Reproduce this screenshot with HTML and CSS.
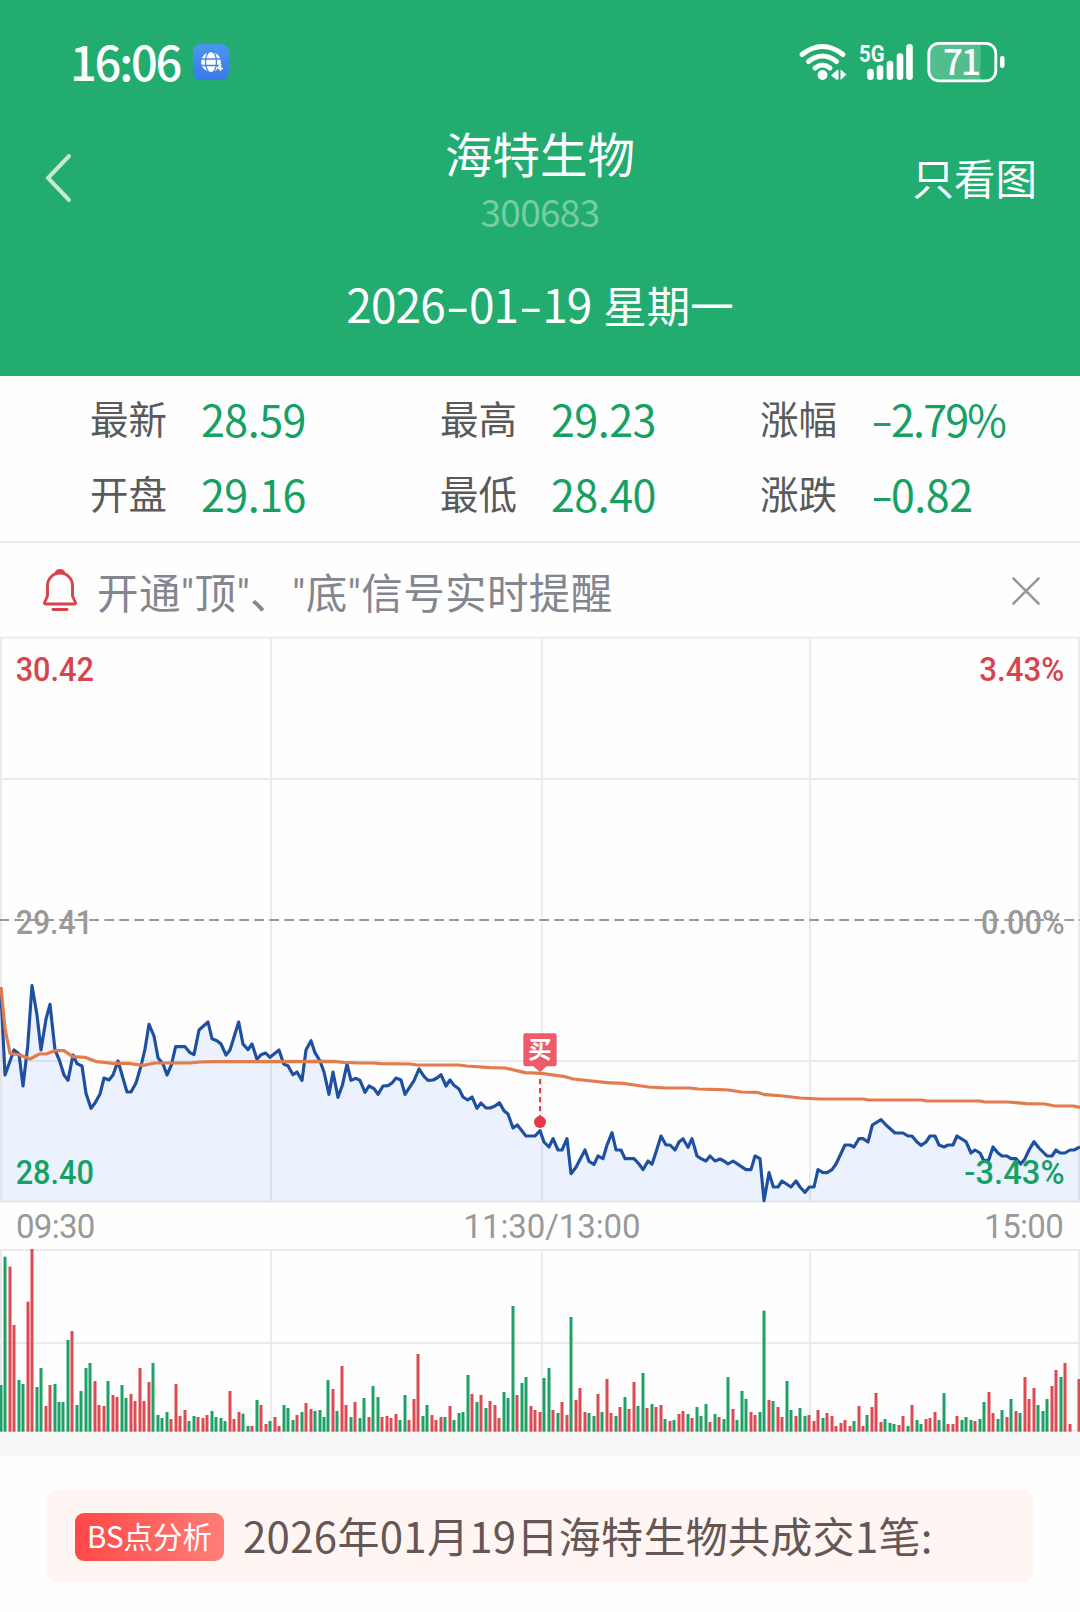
FILE: index.html
```
<!DOCTYPE html>
<html lang="zh-CN">
<head>
    <meta charset="UTF-8">
    <meta name="viewport" content="width=device-width, initial-scale=1.0">
    <title>海特生物 300683</title>
    <link rel="stylesheet" href="styles.css">
</head>
<body>
    <header class="header">
        <div class="status-bar">
            <span class="clock">16:06</span>
            <svg class="globe" width="36" height="36" viewBox="0 0 36 36">
                <defs>
                    <linearGradient id="globeBg" x1="0" y1="0" x2="0" y2="1">
                        <stop offset="0" stop-color="#4a97ee"/>
                        <stop offset="1" stop-color="#3a78ea"/>
                    </linearGradient>
                </defs>
                <rect width="36" height="36" rx="8" fill="url(#globeBg)"/>
                <circle cx="18" cy="18" r="10" fill="#fff"/>
                <g fill="none" stroke="#4286ec" stroke-width="1.3">
                    <ellipse cx="18" cy="18" rx="5.5" ry="11"/>
                    <path d="M7 15h22M7 21.5h22"/>
                </g>
                <path d="M24 27v-5h6v5z" fill="#3f7feb"/>
                <path d="M27.500 20v7M24.500 24.500l3-4M25 24.500h5" fill="none" stroke="#fff" stroke-width="1.500"/>
            </svg>
            <svg class="wifi" width="48" height="38" viewBox="0 0 48 38">
                <g fill="none" stroke="#fff" stroke-width="5" stroke-linecap="round">
                    <path d="M3 11.500Q23.500 -4.500 44 11.500"/>
                    <path d="M9.500 18.500Q23.500 7.500 37.500 18.500"/>
                    <path d="M16 25Q23.500 19 31 25"/>
                </g>
                <circle cx="23.500" cy="32" r="4.900" fill="#fff"/>
                <path d="M32 32.500l6-5.500v10zM47.500 31.500l-6-5v10.500zM38 27h1.500v9.500H38z" fill="#fff"/>
            </svg>
            <svg class="signal" width="56" height="38" viewBox="0 0 56 38">
                <text class="net" x="0" y="19" textLength="25.500" lengthAdjust="spacingAndGlyphs">5G</text>
                <g stroke="#fff" stroke-width="6.600" stroke-linecap="round">
                    <path d="M11.500 29v4.700M21 25.500v8.200M31 21v12.700M41 13.500v20.200M50.500 4.300v29.400"/>
                </g>
            </svg>
            <svg class="battery" width="80" height="42" viewBox="0 0 80 42">
                <path d="M11 3H53.500V39H11a8 8 0 0 1-8-8V11a8 8 0 0 1 8-8z" fill="#fff" opacity=".22"/>
                <rect x="1.800" y="2.300" width="67" height="37.500" rx="10" fill="none" stroke="#fff" stroke-width="2.800"/>
                <rect x="73" y="15" width="4.500" height="12" rx="2.200" fill="#fff"/>
                <text class="level" x="16" y="33.500" textLength="38">71</text>
            </svg>
        </div>

        <div class="nav">
            <svg class="back" width="28" height="50" viewBox="0 0 28 50">
                <path d="M25 3L4 25L25 47" fill="none" stroke="#c6e8d6" stroke-width="4" stroke-linecap="round"/>
            </svg>
            <div class="name">
                <h1>海特生物</h1>
                <div class="code">300683</div>
            </div>
            <a class="only-chart">只看图</a>
        </div>

        <div class="date"><span class="num">2026<i>-</i>01<i>-</i>19</span> 星期一</div>
    </header>

    <section class="stats">
        <div class="stat"><span class="label">最新</span><span class="value">28.59</span></div>
        <div class="stat"><span class="label">最高</span><span class="value">29.23</span></div>
        <div class="stat"><span class="label">涨幅</span><span class="value percent"><i>-</i>2.79%</span></div>
        <div class="stat"><span class="label">开盘</span><span class="value">29.16</span></div>
        <div class="stat"><span class="label">最低</span><span class="value">28.40</span></div>
        <div class="stat"><span class="label">涨跌</span><span class="value"><i>-</i>0.82</span></div>
    </section>

    <section class="notice">
        <svg class="bell" width="36" height="44" viewBox="0 0 36 44">
            <g fill="none" stroke="#d8434b" stroke-width="2.900" stroke-linecap="round" stroke-linejoin="round">
                <path d="M5.500 28V17.500a12.500 12.500 0 0 1 25 0V28L33.500 34.500Q33.800 36 32 36H4Q2.200 36 2.500 34.500z"/>
                <path d="M14 5Q15 2.500 18 2.500T22 5"/>
                <path d="M11 41.500h14"/>
            </g>
        </svg>
        <span class="notice-text">开通"顶"、"底"信号实时提醒</span>
        <svg class="close" width="30" height="30" viewBox="0 0 30 30">
            <path d="M2.500 2.500l25 25M27.500 2.500l-25 25" stroke="#999" stroke-width="2.600" stroke-linecap="round"/>
        </svg>
    </section>

    <!-- minute chart, 3 units per pixel -->
    <svg class="price-chart" viewBox="0 -792 3240 1701">
        <g class="grid">
            <path d="M0 -787H3240M0 -363H3240M0 483H3240M0 905H3240"/>
            <path d="M3 -787V905M813 -787V905M1626 -787V905M2430 -787V905M3237 -787V905"/>
        </g>
        <path class="zero" d="M-2 60H3240"/>
        <g class="axis">
            <text class="up" x="47" y="-657" textLength="235" lengthAdjust="spacingAndGlyphs">30.42</text>
            <text class="up" x="2938" y="-657" textLength="255" lengthAdjust="spacingAndGlyphs">3.43%</text>
            <text class="flat" x="47" y="101" textLength="232" lengthAdjust="spacingAndGlyphs">29.41</text>
            <text class="flat" x="2943" y="101" textLength="251" lengthAdjust="spacingAndGlyphs">0.00%</text>
        </g>
        <polygon class="area" id="area"/>
        <polyline class="price" id="price"/>
        <polyline class="avg" id="avg"/>
        <g class="axis">
            <text class="down" x="47" y="852" textLength="235" lengthAdjust="spacingAndGlyphs">28.40</text>
            <text class="down" x="2893" y="852" textLength="301" lengthAdjust="spacingAndGlyphs">-3.43%</text>
        </g>
        <g class="buy">
            <path class="buy-line" d="M1620 537V655"/>
            <circle cx="1620" cy="666" r="18"/>
            <path class="buy-box" d="M1576 400H1664Q1670 400 1670 406V493Q1670 499 1664 499H1640L1620 516L1600 499H1576Q1570 499 1570 493V406Q1570 400 1576 400z"/>
            <text x="1620" y="474" text-anchor="middle">买</text>
        </g>
    </svg>

    <div class="times">
        <span>09:30</span>
        <span class="noon">11:30/13:00</span>
        <span>15:00</span>
    </div>

    <svg class="volume-chart" viewBox="0 24 3240 552">
        <g class="grid">
            <path d="M0 30H3240M0 309H3240M0 572H3240"/>
            <path d="M3 30V575M813 30V575M1626 30V575M2430 30V575M3237 30V575"/>
        </g>
        <g id="volume"></g>
    </svg>

    <div class="gap"></div>

    <section class="analysis">
        <span class="tag">BS点分析</span>
        <span class="summary">2026年01月19日海特生物共成交1笔:</span>
    </section>

    <script src="chart.js"></script>
</body>
</html>
```
FILE: styles.css
```
body {
    margin: 0;
    width: 1080px;
    height: 1612px;
    overflow: hidden;
    background-color: #fefefe;
    font-family: "Noto Sans CJK SC", "Noto Sans", sans-serif;
}

svg {
    display: block;
    flex-shrink: 0;
}

.header {
    height: 376px;
    background-color: #22ac6f;
    color: #ffffff;
}

.status-bar {
    display: flex;
    align-items: flex-start;
    height: 122px;
    padding: 0 73px 0 70px;
    box-sizing: border-box;
}

.status-bar svg {
    overflow: visible;
}

.clock {
    width: 123px;
    margin-top: 31px;
    font-size: 47px;
    font-weight: 500;
    line-height: 60px;
    letter-spacing: -2.2px;
}

.globe {
    margin-top: 44px;
}

.wifi {
    margin-top: 43px;
    margin-left: auto;
}

.signal {
    margin-top: 43px;
    margin-left: 12px;
}

.net {
    font-family: Roboto, sans-serif;
    font-size: 24px;
    font-weight: 700;
    fill: #ffffff;
}

.battery {
    margin-top: 41px;
    margin-left: 12px;
}

.level {
    font-size: 35px;
    font-weight: 500;
    fill: #ffffff;
}

.nav {
    display: grid;
    grid-template-columns: 200px 1fr 200px;
    height: 117px;
}

.back {
    margin: 31px 0 0 44px;
}

.name {
    padding-top: 2px;
    text-align: center;
}

.name h1 {
    margin: 0;
    font-size: 47.5px;
    font-weight: 400;
    line-height: 58px;
}

.code {
    font-size: 37px;
    line-height: 58px;
    letter-spacing: -0.7px;
    color: #76cca4;
}

.only-chart {
    padding-right: 43px;
    font-size: 41.5px;
    line-height: 111px;
    text-align: right;
}

.date {
    font-size: 43.5px;
    line-height: 128px;
    text-align: center;
    white-space: nowrap;
}

.date .num {
    margin-right: 2px;
    font-size: 46px;
    letter-spacing: -0.9px;
}

/* wide minus sign */
.num i,
.value i {
    display: inline-block;
    font-style: normal;
    transform: scaleX(1.5);
}

.num i {
    width: 24px;
    text-align: center;
}

.value i {
    width: 20px;
    transform-origin: left;
}

.stats {
    display: grid;
    grid-template-columns: 350px 320px 1fr;
    grid-template-rows: 75px 75px;
    height: 167px;
    padding: 4px 0 0 90px;
    box-sizing: border-box;
    border-bottom: 2px solid #ebebeb;
}

.stat {
    display: flex;
    line-height: 75px;
    white-space: nowrap;
}

.label {
    width: 111px;
    font-size: 38.5px;
    color: #5a5a5a;
}

.value {
    margin-top: 1px;
    font-size: 43px;
    letter-spacing: -0.5px;
    color: #16a064;
}

.percent {
    letter-spacing: -1.8px;
}

.notice {
    display: flex;
    align-items: center;
    height: 93px;
    padding: 0 39px 0 42px;
}

.notice-text {
    margin-left: 19px;
    margin-top: 11px;
    font-family: Roboto, "Noto Sans CJK SC", sans-serif;
    font-size: 41.5px;
    line-height: 60px;
    letter-spacing: 0.4px;
    color: #82868e;
}

.close {
    margin-left: auto;
    margin-top: 3px;
}

.price-chart {
    width: 1080px;
    height: 567px;
}

.grid path {
    fill: none;
    stroke: #ebebeb;
    stroke-width: 6;
}

.zero {
    stroke: #999999;
    stroke-width: 6;
    stroke-dasharray: 29 16;
}

.axis text {
    font-family: Roboto, sans-serif;
    font-size: 98px;
    font-weight: 500;
}

.up {
    fill: #d6444c;
}

.down {
    fill: #16a064;
}

.flat {
    fill: #999999;
}

.area {
    fill: #2b78ff;
    fill-opacity: 0.09;
}

.price,
.avg {
    fill: none;
    stroke-width: 9.5;
    stroke-linejoin: round;
}

.price {
    stroke: #1f50a0;
}

.avg {
    stroke: #e27b4e;
}

.buy circle {
    fill: #e83844;
}

.buy-line {
    stroke: #d8434e;
    stroke-width: 6;
    stroke-dasharray: 16 11;
}

.buy-box {
    fill: #ec4457;
    fill-opacity: 0.88;
}

.buy text {
    font-size: 70px;
    font-weight: 700;
    fill: #ffffff;
}

.times {
    display: flex;
    justify-content: space-between;
    height: 45px;
    padding: 0 17px 0 16px;
    font-family: Roboto, sans-serif;
    font-size: 33px;
    line-height: 47px;
    letter-spacing: -0.7px;
    color: #999999;
}

.noon {
    margin-left: 25px;
    letter-spacing: -0.1px;
}

.volume-chart {
    width: 1080px;
    height: 184px;
}

.bar-up {
    fill: #dc4a52;
}

.bar-down {
    fill: #1fa066;
}

.gap {
    height: 24px;
    background-color: #f6f6f6;
}

.analysis {
    display: flex;
    align-items: center;
    height: 92px;
    margin: 34px 46px 0;
    padding: 0 29px;
    border-radius: 12px;
    background-color: #fff6f4;
}

.tag {
    width: 149px;
    height: 48px;
    margin-top: 1px;
    border-radius: 9px;
    background: linear-gradient(100deg, #ff4647, #ff8079);
    font-size: 29.5px;
    line-height: 45px;
    text-align: center;
    color: #ffffff;
}

.summary {
    margin: -3px 0 0 19px;
    font-size: 42px;
    line-height: 60px;
    letter-spacing: 0.3px;
    color: #665654;
    white-space: nowrap;
}
```
FILE: chart.js
```
// x,y pairs in chart units
const price = `2,262 15,525 42,450 57,462 69,558 83,440 96,257 111,345 123,450 138,357 150,313 165,450 178,480
192,525 204,541 219,465 231,491 246,498 258,580 273,625 285,609 300,582 312,534 327,540 339,525 354,483
381,576 393,576 408,549 423,498 435,447 447,373 462,408 474,473 489,492 501,525 514,495 527,440 555,440
570,458 582,464 597,390 624,366 636,416 651,422 663,432 678,465 690,450 716,366 729,432 744,449 756,432
771,478 783,464 797,459 810,472 837,450 851,492 864,497 879,524 891,516 906,541 918,450 933,422 945,458
960,483 972,516 987,583 999,516 1014,592 1027,556 1041,492 1053,541 1068,535 1080,541 1095,577 1107,558
1122,566 1134,583 1149,558 1164,557 1176,549 1188,534 1203,540 1215,583 1242,542 1257,507 1272,529
1284,541 1299,540 1311,534 1323,524 1338,558 1350,540 1362,556 1377,567 1389,591 1403,600 1416,591
1431,625 1443,609 1458,624 1470,624 1485,618 1498,608 1512,632 1524,642 1539,684 1552,675 1578,708
1605,708 1620,692 1632,726 1647,741 1659,716 1674,750 1686,750 1701,716 1713,821 1728,802 1755,750
1767,784 1782,793 1794,768 1809,776 1821,735 1836,698 1848,750 1863,750 1875,776 1902,776 1917,792
1929,809 1944,783 1956,793 1970,750 1983,708 1998,735 2010,735 2025,750 2037,726 2049,716 2064,742
2076,716 2091,768 2103,776 2118,783 2130,768 2145,783 2160,777 2172,783 2184,792 2199,783 2238,809
2253,809 2265,768 2280,776 2292,902 2307,818 2320,861 2334,861 2346,843 2373,861 2388,843 2400,861
2415,877 2428,861 2442,861 2454,809 2469,818 2481,818 2496,809 2508,792 2535,735 2550,735 2562,741
2577,716 2589,716 2604,726 2617,675 2643,659 2658,675 2685,699 2709,699 2724,708 2736,708 2751,726
2763,736 2778,726 2790,708 2805,708 2817,735 2832,741 2844,735 2859,735 2871,708 2898,725 2913,759
2925,750 2940,759 2952,783 2966,780 2979,741 2994,759 3006,768 3021,768 3033,776 3048,776 3062,792
3075,776 3087,750 3102,725 3117,744 3141,768 3156,768 3168,750 3180,759 3195,759 3210,750 3222,750
3240,741`;

const avg = `3,262 15,385 30,460 60,465 90,477 118,462 138,462 165,452 192,452 218,470 255,472 290,485 340,490
385,490 430,496 465,489 570,489 600,486 640,485 1000,484 1030,487 1080,489 1120,489 1140,491 1230,492
1250,495 1375,495 1400,498 1470,503 1515,504 1575,518 1625,520 1695,530 1720,537 1820,548 1870,550
1945,561 2000,564 2070,564 2095,567 2160,569 2185,570 2225,576 2270,577 2295,584 2350,588 2400,594
2460,597 2590,597 2605,600 2765,600 2780,603 2940,603 2955,606 3025,606 3080,611 3135,612 3165,618
3220,618 3240,622`;

// one entry per minute: top of the bar, g = down, r = up
const volume = `435g 50g 80r 255r 420g 432g 185r 27r 441g 384g 498r 435r 432g 486g 486g 300g 273r 495g 453g 384g
369g 423r 495r 498r 423g 465r 471r 435g 474g 462r 483r 384r 483r 426r 369g 525g 534g 516g 537r 432r
528r 510r 543g 528g 531r 534r 525r 513g 531g 534g 543g 453r 537r 516r 521g 558g 558r 480g 495r 552r
543g 531r 558r 495g 504g 540g 525r 516g 489r 507r 513g 510g 531g 420g 447r 513g 378r 495r 531g 486r
534g 474g 531r 438g 471g 531r 528r 534r 522r 540g 465g 540r 477r 342r 528g 495g 525r 540r 531r 531g
498r 540g 519g 516g 405g 462r 486g 465r 504g 483r 495r 534r 456g 474g 198g 465r 429g 411g 498r 510r
516r 414g 384g 510r 519g 486r 525r 231g 480r 444r 516r 519g 528g 462r 516g 417r 519r 528g 501r 471g
507r 426r 498g 399g 504r 492g 501r 495r 537g 543r 540g 522r 513r 522g 534r 501g 528g 492g 546r 522g
531r 537g 411g 507r 540g 453g 477g 516r 525r 516g 212g 480r 483g 501r 531r 423g 510g 528r 504g 528g
525r 543r 510r 534g 519r 528r 558r 549r 540r 558r 543g 498r 558r 525g 501r 459r 546r 537g 549g 552g
555r 528r 558g 495r 540g 552g 537r 534r 516r 540g 459g 552r 552r 528r 540g 531g 540g 543r 537g 486g
456r 519r 537g 510g 531r 477g 513r 519g 411r 477r 444r 495g 513g 477g 438r 390r 411g 369r 552r 575g
417r`;

document.getElementById('price').setAttribute('points', price);
document.getElementById('avg').setAttribute('points', avg);
document.getElementById('area').setAttribute('points', price + ' 3240,905 2,905');

const group = document.getElementById('volume');
volume.split(/\s+/).forEach((item, i) => {
    const top = parseInt(item);
    const x = Math.round((i * 13.475 + 1.8) / 3) * 3;
    const rect = document.createElementNS('http://www.w3.org/2000/svg', 'rect');
    rect.setAttribute('x', x - 4.5);
    rect.setAttribute('y', top);
    rect.setAttribute('width', 9);
    rect.setAttribute('height', 575 - top);
    rect.setAttribute('class', item.endsWith('r') ? 'bar-up' : 'bar-down');
    group.appendChild(rect);
});
```
